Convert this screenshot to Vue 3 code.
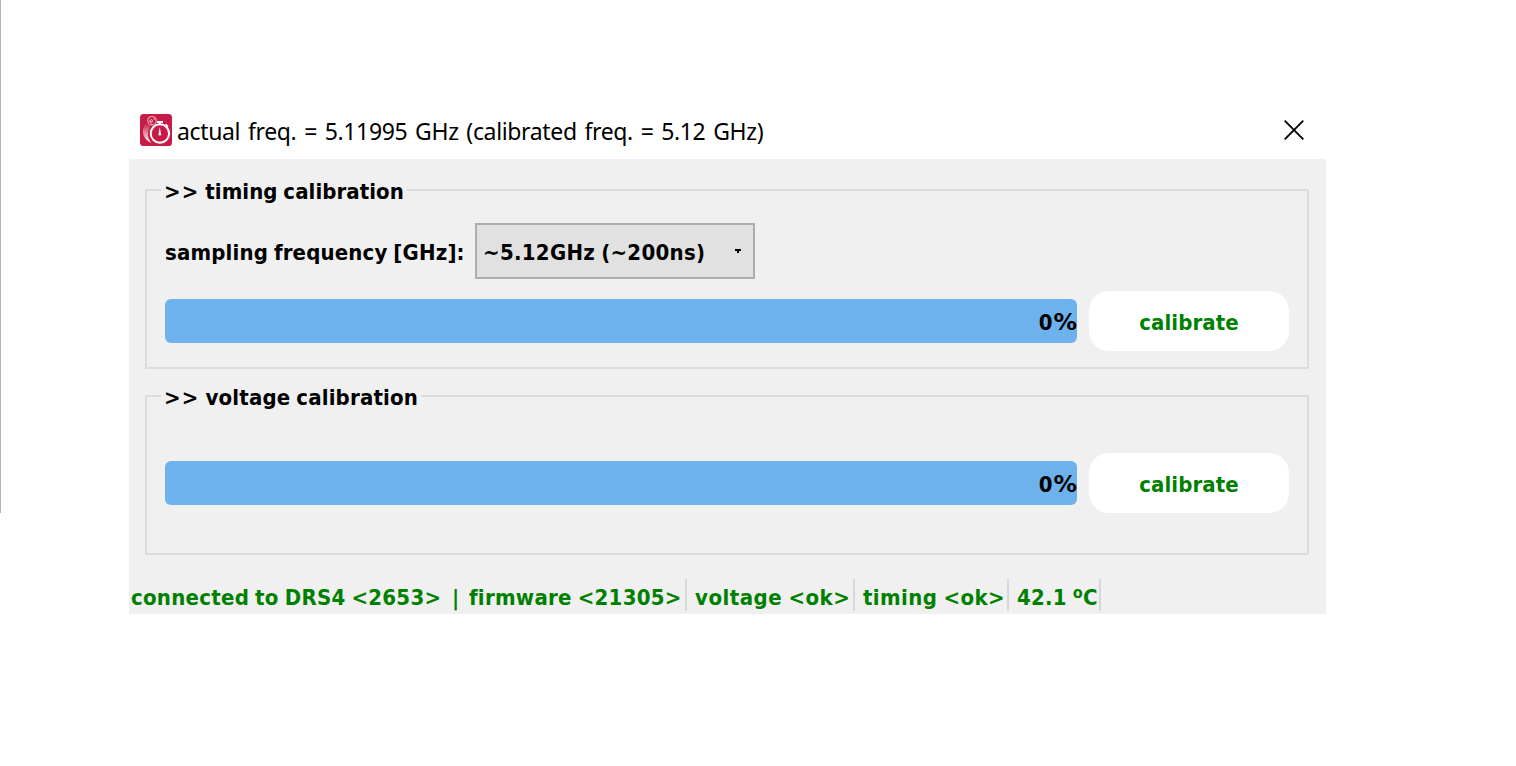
<script setup>
const title = 'actual freq. = 5.11995 GHz (calibrated freq. = 5.12 GHz)'
const status = [
  { key: 'voltage', text: 'voltage <ok>' },
  { key: 'timing', text: 'timing <ok>' },
]
</script>

<template>
  <div class="screen">
    <div class="edge"></div>
    <section class="window">
      <header class="titlebar">
        <svg class="logo" width="32" height="32" viewBox="0 0 32 32">
          <defs>
            <linearGradient id="trail" x1="0" y1="0" x2="0" y2="1">
              <stop offset="0" stop-color="#fff" stop-opacity="0.02" />
              <stop offset="0.5" stop-color="#fff" stop-opacity="0.5" />
              <stop offset="1" stop-color="#fff" stop-opacity="0.95" />
            </linearGradient>
          </defs>
          <rect width="32" height="32" rx="3.5" fill="#c81a46" />
          <path d="M6 9C1 15 1.500 25 11.500 29C7.500 25 6.500 17 11 11Z" fill="url(#trail)" />
          <circle cx="12" cy="6.700" r="4.200" fill="#c81a46" stroke="#eeb0bf" stroke-width="1.100" />
          <path d="M9.800 7.300h2.800c0-2.300-2.800-2.300-2.800 0c0 1.900 1.700 2.200 2.700 1.300M13.200 5h1.900" fill="none" stroke="#f3c3cf" stroke-width=".9" />
          <circle cx="19.900" cy="19.500" r="9.200" fill="#c81a46" stroke="#fff" stroke-width="2" />
          <path d="M17 8h6M19.800 8v3" stroke="#fff" stroke-width="1.800" />
          <path d="M25.400 10.300l2.600 2.600" stroke="#fff" stroke-width="1.900" />
          <path d="M19.800 13l1.300 7.300a1.300 1.300 0 0 1-2.600 0Z" fill="#fff" />
        </svg>
        <h1 class="title">{{ title }}</h1>
        <svg class="close" width="20" height="20" viewBox="0 0 20 20">
          <path d="M.7.700l18.600 18.600M19.300.700L.7 19.300" stroke="#000" stroke-width="1.900" />
        </svg>
      </header>

      <main class="body">
        <section class="group timing">
          <h2 class="legend legend-timing"><span class="arrows">&gt;&gt;</span> timing calibration</h2>
          <div class="field">
            <label class="label">sampling frequency [GHz]:</label>
            <div class="combo">
              <span class="value">~5.12GHz (~200ns)</span>
              <svg width="6" height="4" viewBox="0 0 6 4"><path d="M0 0h6v2h-2v2h-2v-2h-2z" fill="#000" /></svg>
            </div>
          </div>
          <div class="row">
            <div class="progress"><span>0<span class="pct">%</span></span></div>
            <button class="button">calibrate</button>
          </div>
        </section>

        <section class="group voltage">
          <h2 class="legend legend-voltage"><span class="arrows">&gt;&gt;</span> voltage calibration</h2>
          <div class="row">
            <div class="progress"><span>0<span class="pct">%</span></span></div>
            <button class="button">calibrate</button>
          </div>
        </section>

        <footer class="status">
          <div class="cell device"><span class="board">connected to DRS4 &lt;2653&gt;</span><span class="bar">|</span><span>firmware &lt;21305&gt;</span></div>
          <div v-for="s in status" :key="s.key" :class="['cell', s.key]">{{ s.text }}</div>
          <div class="cell temp">42.1 <span class="ord">º</span>C</div>
        </footer>
      </main>
    </section>
  </div>
</template>

<style>
body { background: #fff; }
</style>

<style scoped>
.screen {
  position: relative;
  box-sizing: border-box;
  width: 1516px;
  height: 766px;
  padding: 101px 190px 0 129px;
  overflow: hidden;
}
.edge {
  position: absolute;
  left: 0;
  top: 0;
  width: 1px;
  height: 513px;
  background: #b9b4b0;
}
.window { width: 1197px; }
.titlebar {
  display: flex;
  align-items: center;
  box-sizing: border-box;
  height: 58px;
  padding: 0 22px 0 11px;
}
.logo { flex: none; }
.title {
  flex: 1;
  margin: 1px 0 0 5px;
  font: 400 23px/32px "Noto Sans", "Open Sans", sans-serif;
  letter-spacing: -0.35px;
  word-spacing: 2.1px;
  color: #000;
  white-space: pre;
}
.close { flex: none; }
.body {
  box-sizing: border-box;
  height: 455px;
  padding: 30px 17px 0 16px;
  background: #f0f0f0;
  font: 700 22px/30px "DejaVu Sans Condensed", "DejaVu Sans", sans-serif;
  font-variant-ligatures: none;
  word-spacing: -1.2px;
  color: #000;
}
.group {
  box-sizing: border-box;
  width: 1164px;
  padding: 0 18px;
  border: 2px solid #dcdcdc;
}
.timing.group { height: 180px; margin-bottom: 26px; }
.voltage.group { height: 160px; }
.legend {
  width: fit-content;
  height: 30px;
  margin: -15px 0 0 -4px;
  padding: 0 3px 0 3px;
  background: #f0f0f0;
  font: inherit;
  line-height: 32px;
  white-space: pre;
}
.legend-timing { letter-spacing: 0.06px; }
.legend-voltage { letter-spacing: 0.18px; }
.arrows { letter-spacing: 1.2px; }
.field {
  display: flex;
  align-items: center;
  height: 56px;
  margin-top: 17px;
}
.label { width: 310px; padding-top: 3px; letter-spacing: 0.16px; white-space: pre; }
.combo {
  display: flex;
  align-items: center;
  justify-content: space-between;
  box-sizing: border-box;
  width: 280px;
  height: 56px;
  padding: 0 12px 0 6px;
  border: 2px solid #adadad;
  background: #e1e1e1;
  white-space: pre;
}
.value { padding-top: 3px; letter-spacing: 0.3px; }
.row {
  display: flex;
  align-items: center;
  gap: 12px;
  height: 60px;
}
.timing .row { margin-top: 12px; }
.voltage .row { margin-top: 41px; }
.progress {
  display: flex;
  align-items: center;
  justify-content: flex-end;
  box-sizing: border-box;
  width: 912px;
  height: 44px;
  padding-top: 4px;
  border-radius: 6px;
  background: #6db2ed;
}
.pct { margin-left: 1px; font-family: "DejaVu Sans", sans-serif; font-size: 23.5px; line-height: 1; }
.button {
  width: 200px;
  height: 60px;
  padding: 3px 0 0;
  border: 0;
  border-radius: 20px;
  background: #fff;
  color: #008000;
  font: inherit;
  letter-spacing: 0.1px;
}
.status {
  display: flex;
  height: 32px;
  margin: 24px 0 0 -14px;
  color: #008000;
  line-height: 37px;
}
.cell {
  box-sizing: border-box;
  height: 32px;
  padding-left: 8px;
  border-right: 2px solid #d7d7d7;
  white-space: pre;
}
.cell.device { display: flex; width: 556px; padding-left: 0; letter-spacing: 0.27px; }
.board { width: 321px; }
.bar { width: 17px; }
.cell.voltage { width: 168px; letter-spacing: 0.5px; }
.cell.timing { width: 154px; letter-spacing: 0.4px; }
.cell.temp { width: 92px; letter-spacing: 0.25px; }
.ord { position: relative; top: 2px; font-family: "Noto Sans", sans-serif; font-size: 26px; line-height: 1; }
</style>
